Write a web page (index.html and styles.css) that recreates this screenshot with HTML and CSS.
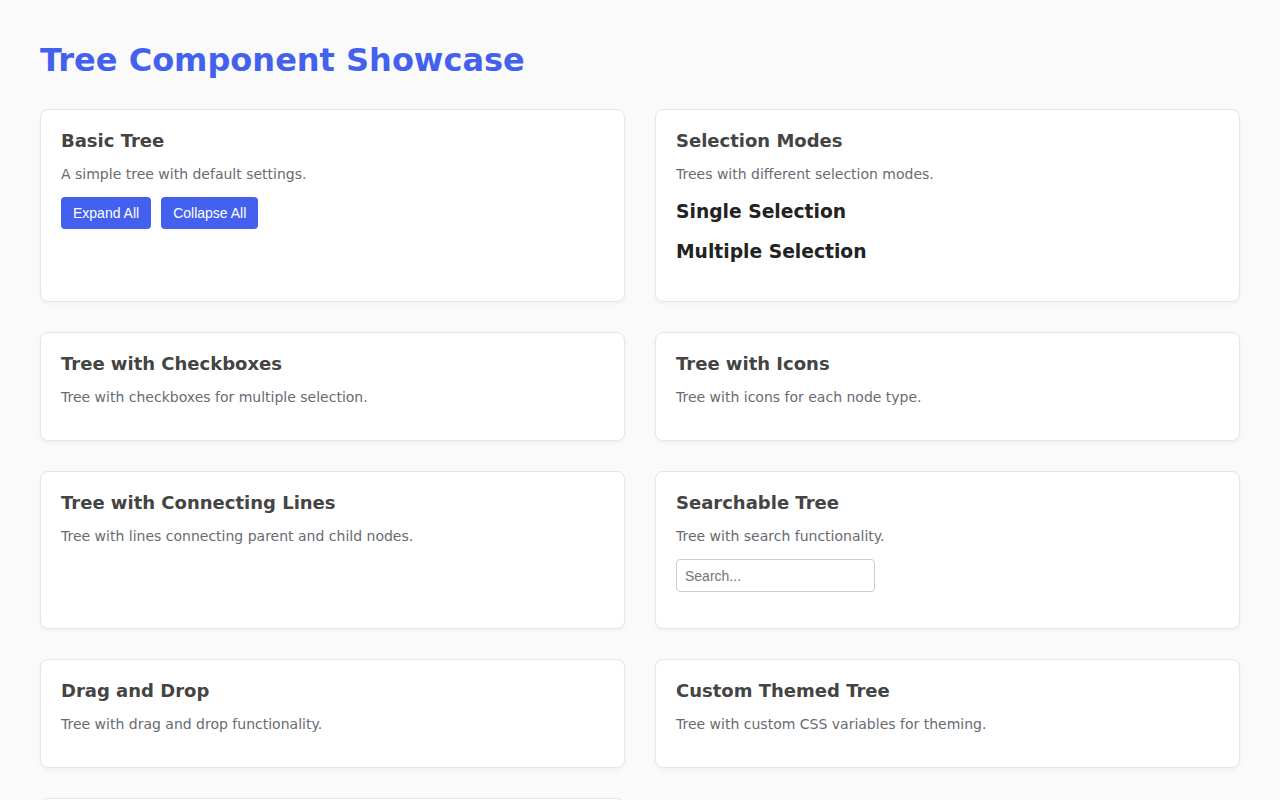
FILE: index.html
```html
<!DOCTYPE html>
<html lang="en">
<head>
<meta charset="utf-8">
<title>Tree Component Showcase</title>
<link rel="stylesheet" href="styles.css">
</head>
<body>
<h1 class="page-title">Tree Component Showcase</h1>
<div class="grid">
  <section class="card">
    <h3 class="card-title">Basic Tree</h3>
    <p class="card-desc">A simple tree with default settings.</p>
    <div class="actions">
      <button class="btn">Expand All</button>
      <button class="btn">Collapse All</button>
    </div>
  </section>
  <section class="card">
    <h3 class="card-title">Selection Modes</h3>
    <p class="card-desc">Trees with different selection modes.</p>
    <h4 class="mode-title">Single Selection</h4>
    <h4 class="mode-title">Multiple Selection</h4>
  </section>
  <section class="card">
    <h3 class="card-title">Tree with Checkboxes</h3>
    <p class="card-desc">Tree with checkboxes for multiple selection.</p>
  </section>
  <section class="card">
    <h3 class="card-title">Tree with Icons</h3>
    <p class="card-desc">Tree with icons for each node type.</p>
  </section>
  <section class="card">
    <h3 class="card-title">Tree with Connecting Lines</h3>
    <p class="card-desc">Tree with lines connecting parent and child nodes.</p>
  </section>
  <section class="card">
    <h3 class="card-title">Searchable Tree</h3>
    <p class="card-desc">Tree with search functionality.</p>
    <input class="search" type="text" placeholder="Search...">
  </section>
  <section class="card">
    <h3 class="card-title">Drag and Drop</h3>
    <p class="card-desc">Tree with drag and drop functionality.</p>
  </section>
  <section class="card">
    <h3 class="card-title">Custom Themed Tree</h3>
    <p class="card-desc">Tree with custom CSS variables for theming.</p>
  </section>
  <section class="card">
    <h3 class="card-title">Lazy Loading</h3>
    <p class="card-desc">Tree with lazily loaded children.</p>
  </section>
</div>
</body>
</html>
```
FILE: styles.css
```css
html, body {
  margin: 0;
  background: #fafafa;
}
body {
  padding: 40px;
  font-family: "DejaVu Sans", sans-serif;
  color: #222;
}
.page-title {
  margin: 1px 0 30px;
  font-size: 32px;
  font-weight: bold;
  color: #4361ee;
  line-height: normal;
}
.grid {
  display: grid;
  grid-template-columns: 1fr 1fr;
  gap: 30px;
}
.card {
  background: #fff;
  border: 1px solid #e6e6e6;
  border-radius: 8px;
  box-shadow: 0 2px 4px rgba(0, 0, 0, 0.04);
  padding: 20px;
}
.card-title {
  margin: 0 0 13px;
  font-size: 18px;
  font-weight: bold;
  color: #444;
  line-height: 21px;
}
.card-desc {
  margin: 0 0 12px;
  font-size: 14px;
  line-height: 21px;
  color: #686b70;
}
.actions {
  display: flex;
  gap: 10px;
  margin-top: 12px;
}
.btn {
  font-family: "Liberation Sans", Arial, sans-serif;
  font-size: 14px;
  line-height: 16px;
  padding: 8px 12px;
  border: none;
  border-radius: 4px;
  background: #4361ee;
  color: #fff;
}
.mode-title {
  margin: 16px 0 19px;
  font-size: 18.72px;
  font-weight: bold;
  color: #222;
  line-height: normal;
}
.mode-title + .mode-title {
  margin-top: 17px;
}
.search {
  display: block;
  box-sizing: border-box;
  width: 199px;
  height: 33px;
  margin: 12px 0 16px;
  padding: 0 8px;
  border: 1px solid #ccc;
  border-radius: 4px;
  font-family: "Liberation Sans", Arial, sans-serif;
  font-size: 14px;
  color: #333;
}
.search::placeholder {
  color: #757575;
}
```
